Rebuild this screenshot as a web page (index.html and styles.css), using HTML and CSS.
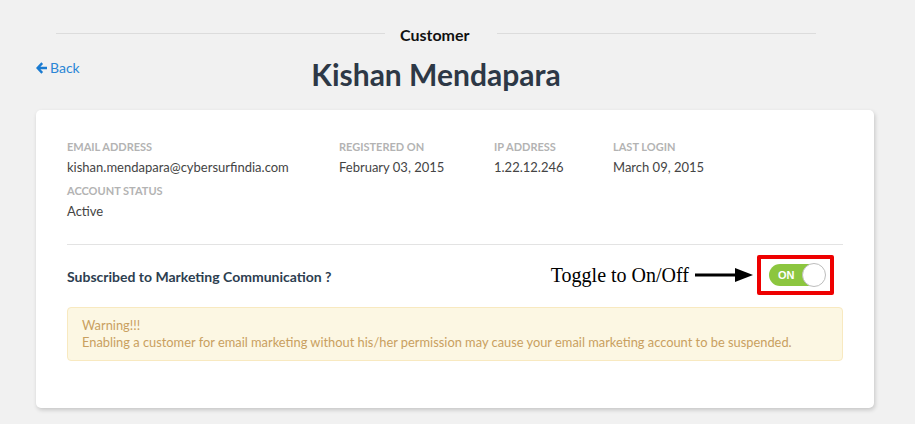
FILE: index.html
```html
<!DOCTYPE html>
<html>
<head>
<meta charset="utf-8">
<link rel="stylesheet" href="styles.css">
</head>
<body>
<div class="page">
  <div class="heading">
    <span class="rule rule-left"></span>
    <span class="section">Customer</span>
    <span class="rule"></span>
  </div>
  <div class="titlebar">
    <a class="back" href="#"><svg width="12" height="12" viewBox="0 0 12 12"><path d="M6.2 1.2 L1.6 6 L6.2 10.8 M1.8 6 H11" fill="none" stroke="#1a7bd1" stroke-width="2.4"/></svg>Back</a>
    <h1 class="name">Kishan Mendapara</h1>
  </div>
  <div class="card">
    <div class="details">
      <div class="field f-email">
        <div class="label">EMAIL ADDRESS</div>
        <div class="value">kishan.mendapara@cybersurfindia.com</div>
      </div>
      <div class="field f-reg">
        <div class="label">REGISTERED ON</div>
        <div class="value">February 03, 2015</div>
      </div>
      <div class="field f-ip">
        <div class="label">IP ADDRESS</div>
        <div class="value">1.22.12.246</div>
      </div>
      <div class="field f-login">
        <div class="label">LAST LOGIN</div>
        <div class="value">March 09, 2015</div>
      </div>
      <div class="field f-status">
        <div class="label">ACCOUNT STATUS</div>
        <div class="value">Active</div>
      </div>
    </div>
    <div class="divider"></div>
    <div class="sub-row">
      <div class="sub-label">Subscribed to Marketing Communication ?</div>
      <div class="annot">
        <span class="annot-text">Toggle to On/Off</span>
        <svg class="arrow" width="58" height="14" viewBox="0 0 58 14"><path d="M0 7 H42" stroke="#000" stroke-width="3"/><path d="M40 0 L58 7 L40 14 Z" fill="#000"/></svg>
        <div class="hl">
          <div class="toggle"><span class="on">ON</span><span class="knob"></span></div>
        </div>
      </div>
    </div>
    <div class="warning">
      <div>Warning!!!</div>
      <div>Enabling a customer for email marketing without his/her permission may cause your email marketing account to be suspended.</div>
    </div>
  </div>
</div>
</body>
</html>
```
FILE: styles.css
```css
html, body { margin: 0; padding: 0; }
body {
  background: #f1f1f1;
  font-family: Lato, "Open Sans", sans-serif;
  width: 915px;
  height: 424px;
  overflow: hidden;
}
.page { padding: 0 41px 0 36px; }
.heading {
  display: flex;
  align-items: center;
  padding: 25px 0 0 20px;
  width: 760px;
  height: 20px;
}
.rule { flex: 1; height: 1px; background: #dcdcdc; margin-top: -3px; }
.rule-left { flex: 0 0 329px; }
.section {
  font-weight: 700;
  font-size: 16px;
  color: #111;
  padding: 0 27px 0 15px;
  line-height: 20px;
}
.titlebar {
  position: relative;
  height: 65px;
}
.back {
  position: absolute;
  left: 0;
  top: 14px;
  color: #2a86d6;
  text-decoration: none;
  font-size: 14px;
  display: flex;
  align-items: center;
  gap: 2px;
}
.back svg { margin-top: 1px; }
.name {
  margin: 0;
  text-align: center;
  font-size: 30px;
  font-weight: 700;
  color: #2d3846;
  line-height: 34px;
  padding-top: 12px;
  padding-right: 38px;
}
.card {
  background: #fff;
  border-radius: 5px;
  box-shadow: 1px 2px 4px rgba(0,0,0,0.18);
  padding: 30px 31px 47px 31px;
  width: 776px;
}
.details {
  display: grid;
  grid-template-columns: 272px 155px 119px 1fr;
  row-gap: 9px;
}
.label {
  font-size: 11px;
  font-weight: 700;
  color: #b3b3b3;
  line-height: 14px;
}
.value {
  font-size: 13px;
  color: #444;
  line-height: 16px;
  margin-top: 5px;
}
.divider { height: 1px; background: #e3e3e3; margin-top: 25px; }
.sub-row {
  display: flex;
  align-items: center;
  justify-content: space-between;
  height: 62px;
}
.sub-label {
  font-size: 14px;
  font-weight: 700;
  color: #2d3e50;
}
.annot { display: flex; align-items: center; margin-right: 9px; margin-top: -2px; }
.annot-text {
  font-family: "Liberation Serif", serif;
  font-size: 20px;
  color: #000;
  margin-right: 6px;
}
.arrow { margin-right: 4px; }
.hl {
  border: 4px solid #ee0000;
  border-radius: 2px;
  padding: 5px 5px 5px 8px;
  display: flex;
}
.toggle {
  position: relative;
  width: 56px;
  height: 22px;
  border-radius: 11px;
  background: #8cc63f;
}
.on {
  position: absolute;
  left: 9px;
  top: 5px;
  font-family: Arial, "Liberation Sans", sans-serif;
  font-weight: 700;
  font-size: 11px;
  line-height: 12px;
  color: #fff;
}
.knob {
  position: absolute;
  right: -1px;
  top: -1px;
  width: 22px;
  height: 22px;
  border-radius: 50%;
  background: #fff;
  border: 1px solid #bdbdbd;
}
.warning {
  background: #fcf7e3;
  border: 1px solid #f8e9c0;
  border-radius: 4px;
  color: #c9a05f;
  font-size: 12.85px;
  line-height: 17px;
  padding: 9px 14px 9px 14px;
}
```
